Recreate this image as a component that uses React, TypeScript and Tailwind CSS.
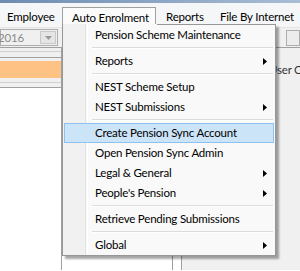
import React from 'react';

type Item = { label?: string; sub?: boolean; active?: boolean; sep?: boolean };

const items: Item[] = [
  { label: 'Pension Scheme Maintenance' },
  { sep: true },
  { label: 'Reports', sub: true },
  { sep: true },
  { label: 'NEST Scheme Setup' },
  { label: 'NEST Submissions', sub: true },
  { sep: true },
  { label: 'Create Pension Sync Account', active: true },
  { label: 'Open Pension Sync Admin' },
  { label: 'Legal & General', sub: true },
  { label: "People's Pension", sub: true },
  { sep: true },
  { label: 'Retrieve Pending Submissions' },
  { sep: true },
  { label: 'Global', sub: true },
];

const Arrow = () => (
  <svg width="4" height="7" viewBox="0 0 4 7" className="absolute left-[198px] top-[6px]">
    <path d="M0 0 L4 3.5 L0 7 Z" fill="#000" />
  </svg>
);

export default function App() {
  return (
    <div className="relative w-[300px] h-[271px] overflow-hidden bg-white text-[11.5px] tracking-[-0.2px] text-black font-['Lato','Noto_Sans',sans-serif]">
      {/* window frame */}
      <div className="h-[3px] bg-gradient-to-r from-[#6e8cb1] to-[#a9bdd4]" />

      {/* menu bar */}
      <div className="flex h-[25px] bg-[#f5f6f7] border-b border-[#e4e4e4] whitespace-nowrap">
        <div className="w-[62px] shrink-0 pl-[7px] pt-[5px]">Employee</div>
        <div className="w-[94px] shrink-0 mt-[4px] pl-[9px] pt-px bg-[#fbfbfb] border-x border-t border-[#a0a0a0]">Auto Enrolment</div>
        <div className="w-[64px] shrink-0 pl-[10px] pt-[5px]">Reports</div>
        <div className="pt-[5px]">File By Internet</div>
      </div>

      {/* toolbar */}
      <div className="flex h-[20px] bg-[#f0f0f0] border-b border-[#a0a0a0]">
        <div className="flex w-[58px] shrink-0 h-[17px] mt-px border border-[#adadad] bg-[#f0f0f0]">
          <div className="flex-1 text-[#8a8a8a] leading-[15px] -ml-[3px]">2016</div>
          <div className="w-[16px] m-px bg-[#e5e5e5] border border-[#c8c8c8] flex items-center justify-center">
            <svg width="7" height="4" viewBox="0 0 7 4">
              <path d="M0 0 L7 0 L3.5 4 Z" fill="#9a9a9a" />
            </svg>
          </div>
        </div>
        <div className="flex-1" />
        <div className="w-[14px] shrink-0 h-[16px] mt-[2px] border border-[#adadad] bg-[#ececec]" />
      </div>

      {/* content */}
      <div className="flex h-[222px]">
        <div className="w-[62px] shrink-0 border-r border-[#a0a0a0] flex flex-col">
          <div className="h-[4px] border-b border-[#d0d0d0] bg-[#f0f0f0]" />
          <div className="h-[6px] bg-[#f0f0f0] border-b border-[#a0a0a0]" />
          <div className="h-[3px] bg-[#f0f0f0]" />
          <div className="h-[17px] bg-[#ffc285]" />
          <div className="h-[5px] bg-[#f0f0f0] border-b border-[#d0d0d0]" />
          <div className="h-[5px] bg-[#f0f0f0] border-b border-[#a0a0a0]" />
          <div className="flex-1 bg-white" />
        </div>
        <div className="w-[110px] shrink-0 bg-white" />
        <div className="w-[10px] shrink-0 border-x border-[#a0a0a0] bg-white" />
        <div className="flex-1 min-w-0 overflow-hidden bg-[#f0f0f0] flex flex-col">
          <div className="h-[30px] flex items-end pl-[87px] pb-0 text-[#333] whitespace-nowrap">
            User Options
          </div>
        </div>
      </div>

      {/* dropdown */}
      <div className="absolute left-[62px] top-[24px] w-[214px] border-x border-b border-[#979797] bg-[#f9f9f9] shadow-[3px_3px_2px_rgba(0,0,0,0.35)]">
        <div className="absolute left-[94px] right-0 top-0 h-px bg-[#979797]" />
        <div className="absolute left-0 top-0 bottom-0 w-[23px] bg-[#f1f1f1] border-r border-[#e2e3e3]" />
        <div className="absolute left-[24px] top-0 bottom-0 w-px bg-white" />
        <div className="relative pt-px">
          {items.map((it, i) =>
            it.sep ? (
              <div key={i} className="h-[6px] ml-[29px] mr-[2px] flex flex-col justify-center">
                <div className="h-px bg-[#dcdcdc]" />
                <div className="h-px bg-white" />
              </div>
            ) : (
              <div
                key={i}
                className={`relative h-[20px] mx-px pl-[30px] flex items-center whitespace-nowrap border ${
                  it.active ? 'bg-[#cce4f8] border-[#8fc1ee]' : 'border-transparent'
                }`}
              >
                {it.label}
                {it.sub && <Arrow />}
              </div>
            )
          )}
        </div>
      </div>
    </div>
  );
}
